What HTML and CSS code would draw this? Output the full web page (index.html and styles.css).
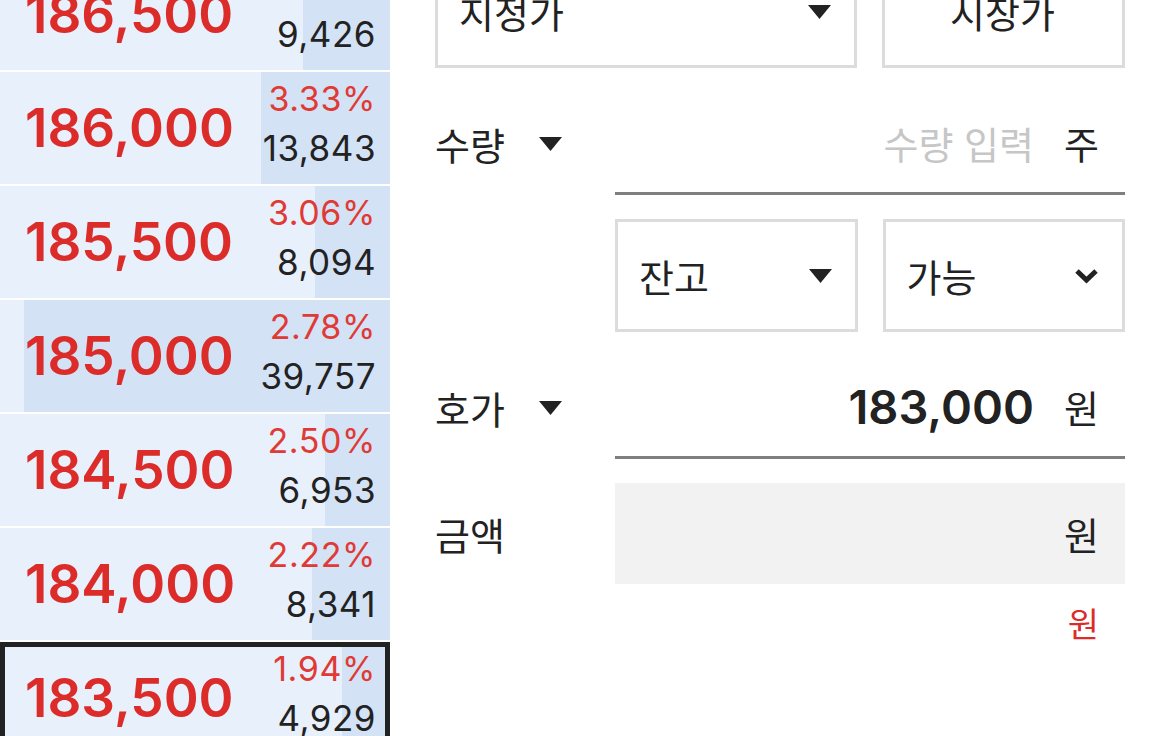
FILE: index.html
```html
<!DOCTYPE html>
<html lang="ko">
<head>
  <meta charset="UTF-8">
  <meta name="viewport" content="width=device-width, initial-scale=1.0">
  <title>주문 - 호가</title>
  <link rel="stylesheet" href="styles.css">
</head>
<body>
  <div class="screen">
    <!-- 호가창 (매도 호가) -->
    <div class="orderbook">
      <div class="ask">
        <span class="bar" style="width:87px"></span>
        <span class="price">186,500</span>
        <div class="side"><span class="rate">3.61%</span><span class="qty">9,426</span></div>
      </div>
      <div class="ask">
        <span class="bar" style="width:129px"></span>
        <span class="price">186,000</span>
        <div class="side"><span class="rate">3.33%</span><span class="qty">13,843</span></div>
      </div>
      <div class="ask">
        <span class="bar" style="width:75px"></span>
        <span class="price">185,500</span>
        <div class="side"><span class="rate">3.06%</span><span class="qty">8,094</span></div>
      </div>
      <div class="ask">
        <span class="bar" style="width:366px"></span>
        <span class="price">185,000</span>
        <div class="side"><span class="rate">2.78%</span><span class="qty">39,757</span></div>
      </div>
      <div class="ask">
        <span class="bar" style="width:65px"></span>
        <span class="price">184,500</span>
        <div class="side"><span class="rate">2.50%</span><span class="qty">6,953</span></div>
      </div>
      <div class="ask">
        <span class="bar" style="width:78px"></span>
        <span class="price">184,000</span>
        <div class="side"><span class="rate">2.22%</span><span class="qty">8,341</span></div>
      </div>
      <div class="ask current">
        <span class="bar" style="width:43px"></span>
        <span class="price">183,500</span>
        <div class="side"><span class="rate">1.94%</span><span class="qty">4,929</span></div>
      </div>
    </div>

    <!-- 주문 입력 -->
    <div class="order-form">
      <div class="form-row">
        <div class="box type-select">
          <span>지정가</span>
          <svg class="caret" width="23" height="14" viewBox="0 0 23 14"><polygon points="0,0 23,0 11.5,14" /></svg>
        </div>
        <div class="box market-btn"><span>시장가</span></div>
      </div>

      <div class="form-row">
        <div class="label">
          <span>수량</span>
          <svg class="caret" width="23" height="14" viewBox="0 0 23 14"><polygon points="0,0 23,0 11.5,14" /></svg>
        </div>
        <div class="field">
          <input class="field-input" type="text" placeholder="수량 입력">
          <span class="unit">주</span>
        </div>
      </div>

      <div class="form-row">
        <div class="spacer"></div>
        <div class="box half">
          <span>잔고</span>
          <svg class="caret" width="23" height="14" viewBox="0 0 23 14"><polygon points="0,0 23,0 11.5,14" /></svg>
        </div>
        <div class="box half">
          <span>가능</span>
          <svg class="chevron" width="25" height="16" viewBox="0 0 25 16"><polyline points="3,3 12.5,12 22,3" /></svg>
        </div>
      </div>

      <div class="form-row">
        <div class="label">
          <span>호가</span>
          <svg class="caret" width="23" height="14" viewBox="0 0 23 14"><polygon points="0,0 23,0 11.5,14" /></svg>
        </div>
        <div class="field">
          <input class="field-input amount" type="text" value="183,000">
          <span class="unit">원</span>
        </div>
      </div>

      <div class="form-row">
        <div class="label"><span>금액</span></div>
        <div class="field readonly">
          <span class="unit">원</span>
        </div>
      </div>

      <div class="form-row total">
        <span class="unit red">원</span>
      </div>
    </div>
  </div>
</body>
</html>
```

FILE: styles.css
```css
/* Reset */
html, body {
  margin: 0;
  padding: 0;
}
body {
  font-family: Inter, "Noto Sans CJK KR", sans-serif;
  background-color: #fff;
  color: #222;
  height: 736px;
  overflow: hidden;
}
.screen {
  display: flex;
  align-items: flex-start;
  gap: 45px;
  margin-top: -45px;
}
/* 호가창 */
.orderbook {
  flex: none;
  width: 390px;
  padding-top: 3px;
  display: flex;
  flex-direction: column;
  gap: 2px;
}
.ask {
  position: relative;
  height: 112px;
  box-sizing: border-box;
  padding: 0 14px 0 25px;
  background-color: #e8f0fb;
  display: flex;
  align-items: center;
  justify-content: space-between;
}
.ask .bar {
  position: absolute;
  top: 0;
  right: 0;
  bottom: 0;
  background-color: #d3e2f5;
}
.ask.current .bar {
  top: 5px;
  right: 5px;
  bottom: 5px;
}
/* 현재가 테두리 */
.ask.current::after {
  content: "";
  position: absolute;
  top: 0;
  left: 0;
  right: 0;
  bottom: 0;
  border: 5px solid #222;
}
.price {
  position: relative;
  font-size: 53px;
  font-weight: 600;
  color: #dc2c29;
}
.side {
  position: relative;
  display: flex;
  flex-direction: column;
  align-items: flex-end;
  margin-top: -8px;
}
.rate {
  font-size: 34px;
  line-height: 48px;
  letter-spacing: 0.6px;
  color: #e03a36;
}
.qty {
  font-size: 35px;
  line-height: 50px;
  letter-spacing: 0.5px;
  color: #222;
}
/* 주문 입력 */
.order-form {
  flex: none;
  width: 690px;
  display: flex;
  flex-direction: column;
  gap: 24px;
  font-family: "Noto Sans CJK KR", sans-serif;
  font-size: 38px;
}
.form-row {
  display: flex;
  align-items: center;
  gap: 25px;
}
.label {
  flex: none;
  width: 155px;
  display: flex;
  align-items: center;
  gap: 34px;
}
.spacer {
  flex: none;
  width: 155px;
}
.caret polygon {
  fill: #222;
}
.chevron polyline {
  fill: none;
  stroke: #222;
  stroke-width: 5;
}
.box {
  height: 113px;
  box-sizing: border-box;
  border: 3px solid #dcdcdc;
  padding: 0 23px 0 21px;
  display: flex;
  align-items: center;
  justify-content: space-between;
}
.type-select {
  flex: 1;
}
.market-btn {
  flex: none;
  width: 243px;
  justify-content: center;
}
.half {
  flex: 1;
}
.field {
  flex: 1;
  min-width: 0;
  height: 103px;
  box-sizing: border-box;
  border-bottom: 3px solid #7f7f7f;
  padding-right: 26px;
  display: flex;
  align-items: center;
  justify-content: flex-end;
  gap: 30px;
}
.field.readonly {
  height: 101px;
  border-bottom: none;
  background-color: #f2f2f2;
}
.field-input {
  flex: 1;
  width: 0;
  min-width: 0;
  border: none;
  outline: none;
  background: none;
  padding: 0;
  text-align: right;
  font-family: "Noto Sans CJK KR", sans-serif;
  font-size: 38px;
  color: #222;
}
.field-input::placeholder {
  color: #c6c6c6;
}
.field-input.amount {
  font-family: Inter, sans-serif;
  font-size: 47px;
  font-weight: 600;
}
.unit {
  color: #222;
}
.total {
  justify-content: flex-end;
  padding-right: 26px;
  margin-top: -10px;
}
.unit.red {
  font-size: 34px;
  color: #dc2c29;
}
```
